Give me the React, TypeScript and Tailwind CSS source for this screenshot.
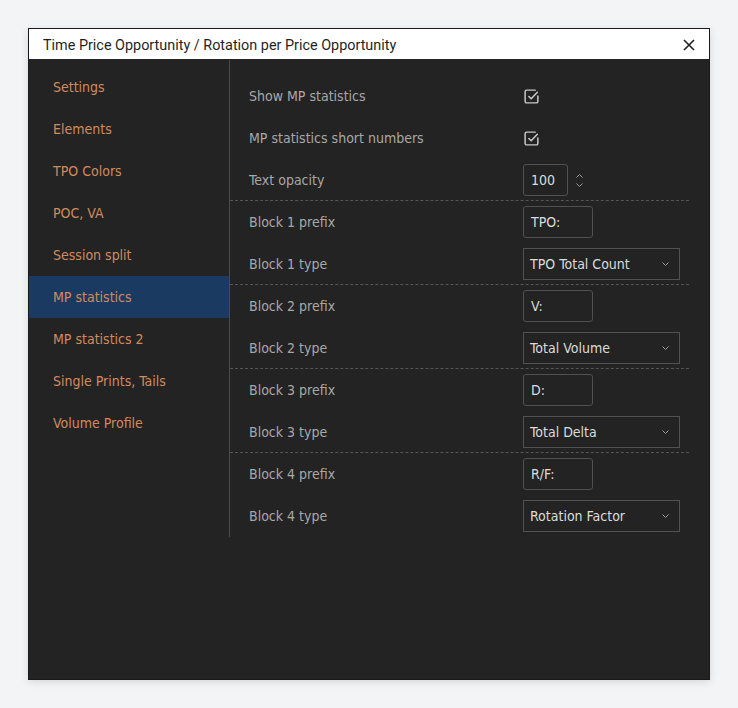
import { useState } from 'react';

const tabs = [
  'Settings',
  'Elements',
  'TPO Colors',
  'POC, VA',
  'Session split',
  'MP statistics',
  'MP statistics 2',
  'Single Prints, Tails',
  'Volume Profile',
];

const blocks = [
  { prefix: 'TPO:', type: 'TPO Total Count' },
  { prefix: 'V:', type: 'Total Volume' },
  { prefix: 'D:', type: 'Total Delta' },
  { prefix: 'R/F:', type: 'Rotation Factor' },
];

const CheckIcon = () => (
  <svg width="17" height="17" viewBox="0 0 16 16" fill="none" stroke="#c8c8c8" strokeWidth="1.4" strokeLinecap="round" strokeLinejoin="round">
    <path d="M14 7.5V12.5a1.5 1.5 0 0 1-1.5 1.5h-9A1.5 1.5 0 0 1 2 12.5v-9A1.5 1.5 0 0 1 3.5 2h8" />
    <path d="M5.5 8l2.2 2.2L13.5 4" />
  </svg>
);

const Chevron = () => (
  <svg width="7" height="4" viewBox="0 0 7 4" fill="none" stroke="#9a9a9a" strokeWidth="1">
    <path d="M0.5 0.5L3.5 3.5l3-3" />
  </svg>
);

const Row = ({ label, children }: { label: string; children: React.ReactNode }) => (
  <div className="grid h-[42px] grid-cols-[274px_1fr] items-center pl-[19px]">
    <span className="text-[#a8a8a8]">{label}</span>
    <div className="flex items-center">{children}</div>
  </div>
);

const TextBox = ({ value, width = 'w-[70px]' }: { value: string; width?: string }) => (
  <div className={`flex h-[32px] ${width} items-center rounded-[3px] border border-[#505050] px-[7px] text-[#dcdcdc]`}>
    {value}
  </div>
);

const Select = ({ value }: { value: string }) => (
  <div className="flex h-[32px] w-[157px] items-center justify-between border border-[#505050] pr-[10px] pl-[6px] text-[#dcdcdc]">
    <span>{value}</span>
    <Chevron />
  </div>
);

export default function App() {
  const [active, setActive] = useState(5);

  return (
    <div className="min-h-[708px] bg-[#f3f4f6] pt-[28px] pl-[28px]">
      <div className="flex h-[652px] w-[682px] flex-col border border-[#1a1a1a] shadow-[0_2px_8px_rgba(0,0,0,0.12)]">
        <div className="flex h-[30px] shrink-0 items-center justify-between bg-white pt-[3px] pr-[14px] pl-[14px] font-['Roboto',sans-serif] text-[14.4px] text-[#1f1f1f]">
          <span>Time Price Opportunity / Rotation per Price Opportunity</span>
          <svg width="12" height="12" viewBox="0 0 12 12" stroke="#1f1f1f" strokeWidth="1.6" className="-mt-[2px]">
            <path d="M1 1l10 10M11 1L1 11" />
          </svg>
        </div>
        <div className="flex flex-1 items-start bg-[#232323] font-['DejaVu_Sans',sans-serif] text-[14px] font-stretch-condensed">
          <div className="flex w-[200px] flex-col self-stretch pt-[7px]">
            {tabs.map((t, i) => (
              <button
                key={t}
                onClick={() => setActive(i)}
                className={`flex h-[42px] items-center pl-[24px] text-left text-[#d28a5c] ${i === active ? 'bg-[#1a3a62]' : ''}`}
              >
                {t}
              </button>
            ))}
          </div>
          <div className="mt-[1px] mr-[20px] flex-1 border-l border-[#4a4a4a] pt-[15px]">
            <Row label="Show MP statistics">
              <CheckIcon />
            </Row>
            <Row label="MP statistics short numbers">
              <CheckIcon />
            </Row>
            <Row label="Text opacity">
              <TextBox value="100" width="w-[45px]" />
              <div className="ml-[8px] flex flex-col gap-[5px]">
                <svg width="7" height="4" viewBox="0 0 7 4" fill="none" stroke="#a0a0a0" strokeWidth="1">
                  <path d="M0.5 3.5L3.5 0.5l3 3" />
                </svg>
                <Chevron />
              </div>
            </Row>
            {blocks.map((b, i) => (
              <div key={i} className="-mt-px border-t border-dashed border-[#555]">
                <Row label={`Block ${i + 1} prefix`}>
                  <TextBox value={b.prefix} />
                </Row>
                <Row label={`Block ${i + 1} type`}>
                  <Select value={b.type} />
                </Row>
              </div>
            ))}
          </div>
        </div>
      </div>
    </div>
  );
}
